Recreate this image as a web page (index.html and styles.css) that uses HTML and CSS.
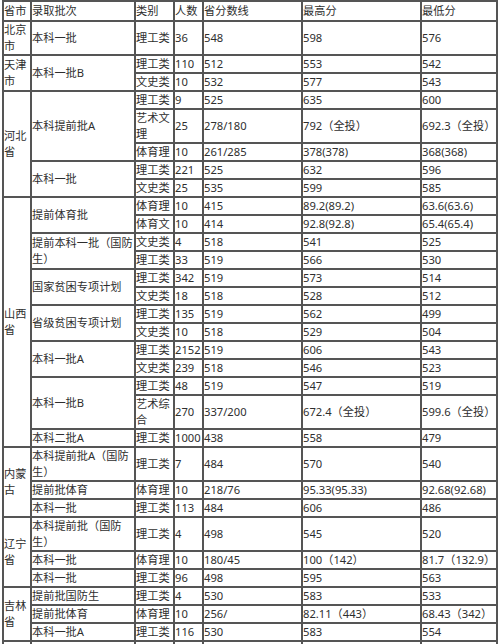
FILE: index.html
```html
<!DOCTYPE html>
<html lang="zh-CN">
<head>
<meta charset="utf-8">
<title>录取分数</title>
<link rel="stylesheet" href="styles.css">
</head>
<body>
<table class="scores">
  <colgroup>
    <col class="c-prov">
    <col class="c-batch">
    <col class="c-type">
    <col class="c-num">
    <col class="c-line">
    <col class="c-max">
    <col class="c-min">
  </colgroup>
  <thead>
    <tr class="head"><th>省市</th><th>录取批次</th><th>类别</th><th>人数</th><th>省分数线</th><th>最高分</th><th>最低分</th></tr>
  </thead>
  <tbody>
    <tr><td>北京市</td><td>本科一批</td><td>理工类</td><td>36</td><td>548</td><td>598</td><td>576</td></tr>

    <tr><td rowspan="2">天津市</td><td rowspan="2">本科一批B</td><td>理工类</td><td>110</td><td>512</td><td>553</td><td>542</td></tr>
    <tr><td>文史类</td><td>10</td><td>532</td><td>577</td><td>543</td></tr>

    <tr><td rowspan="5">河北省</td><td rowspan="3">本科提前批A</td><td>理工类</td><td>9</td><td>525</td><td>635</td><td>600</td></tr>
    <tr><td>艺术文理</td><td>25</td><td>278/180</td><td>792（全投）</td><td>692.3（全投）</td></tr>
    <tr><td>体育理</td><td>10</td><td>261/285</td><td>378(378)</td><td>368(368)</td></tr>
    <tr><td rowspan="2">本科一批</td><td>理工类</td><td>221</td><td>525</td><td>632</td><td>596</td></tr>
    <tr><td>文史类</td><td>25</td><td>535</td><td>599</td><td>585</td></tr>

    <tr><td rowspan="13">山西省</td><td rowspan="2">提前体育批</td><td>体育理</td><td>10</td><td>415</td><td>89.2(89.2)</td><td>63.6(63.6)</td></tr>
    <tr><td>体育文</td><td>10</td><td>414</td><td>92.8(92.8)</td><td>65.4(65.4)</td></tr>
    <tr><td rowspan="2">提前本科一批（国防生）</td><td>文史类</td><td>4</td><td>518</td><td>541</td><td>525</td></tr>
    <tr><td>理工类</td><td>33</td><td>519</td><td>566</td><td>530</td></tr>
    <tr><td rowspan="2">国家贫困专项计划</td><td>理工类</td><td>342</td><td>519</td><td>573</td><td>514</td></tr>
    <tr><td>文史类</td><td>18</td><td>518</td><td>528</td><td>512</td></tr>
    <tr><td rowspan="2">省级贫困专项计划</td><td>理工类</td><td>135</td><td>519</td><td>562</td><td>499</td></tr>
    <tr><td>文史类</td><td>10</td><td>518</td><td>529</td><td>504</td></tr>
    <tr><td rowspan="2">本科一批A</td><td>理工类</td><td>2152</td><td>519</td><td>606</td><td>543</td></tr>
    <tr><td>文史类</td><td>239</td><td>518</td><td>546</td><td>523</td></tr>
    <tr><td rowspan="2">本科一批B</td><td>理工类</td><td>48</td><td>519</td><td>547</td><td>519</td></tr>
    <tr><td>艺术综合</td><td>270</td><td>337/200</td><td>672.4（全投）</td><td>599.6（全投）</td></tr>
    <tr><td>本科二批A</td><td>理工类</td><td>1000</td><td>438</td><td>558</td><td>479</td></tr>

    <tr><td rowspan="3">内蒙古</td><td>本科提前批A（国防生）</td><td>理工类</td><td>7</td><td>484</td><td>570</td><td>540</td></tr>
    <tr><td>提前批体育</td><td>体育理</td><td>10</td><td>218/76</td><td>95.33(95.33)</td><td>92.68(92.68)</td></tr>
    <tr><td>本科一批</td><td>理工类</td><td>113</td><td>484</td><td>606</td><td>486</td></tr>

    <tr><td rowspan="3">辽宁省</td><td>本科提前批（国防生）</td><td>理工类</td><td>4</td><td>498</td><td>545</td><td>520</td></tr>
    <tr><td>本科一批</td><td>体育理</td><td>10</td><td>180/45</td><td>100（142）</td><td>81.7（132.9）</td></tr>
    <tr><td>本科一批</td><td>理工类</td><td>96</td><td>498</td><td>595</td><td>563</td></tr>

    <tr><td rowspan="3">吉林省</td><td>提前批国防生</td><td>理工类</td><td>4</td><td>530</td><td>583</td><td>533</td></tr>
    <tr><td>提前批体育</td><td>体育理</td><td>10</td><td>256/</td><td>82.11（443）</td><td>68.43（342）</td></tr>
    <tr><td>本科一批A</td><td>理工类</td><td>116</td><td>530</td><td>583</td><td>554</td></tr>

    <tr><td>&nbsp;</td><td>&nbsp;</td><td>&nbsp;</td><td>&nbsp;</td><td>&nbsp;</td><td>&nbsp;</td><td>&nbsp;</td></tr>
  </tbody>
</table>
</body>
</html>
```
FILE: styles.css
```css
html, body {
  margin: 0;
  padding: 0;
  background: #fff;
}

body {
  font-family: "Noto Sans", "Noto Sans CJK SC", sans-serif;
  font-size: 11.2px;
  line-height: 16px;
  color: #2e2e2e;
}

.scores {
  table-layout: fixed;
  width: 496px;
  margin: 0 0 0 2px;
  border: 1px solid #555;
  border-collapse: separate;
  border-spacing: 0;
}

.scores th,
.scores td {
  box-sizing: border-box;
  border: 1px solid #555;
  padding: 0;
  text-align: left;
  vertical-align: middle;
  font-weight: normal;
  line-height: 16px;
  overflow: hidden;
}

.scores .head th {
  padding-top: 1px;
  padding-bottom: 1px;
}

.c-prov { width: 28px; }
.c-batch { width: 104px; }
.c-type { width: 39px; }
.c-num { width: 29px; }
.c-line { width: 99px; }
.c-max { width: 119px; }
.c-min { width: 76px; }
```
